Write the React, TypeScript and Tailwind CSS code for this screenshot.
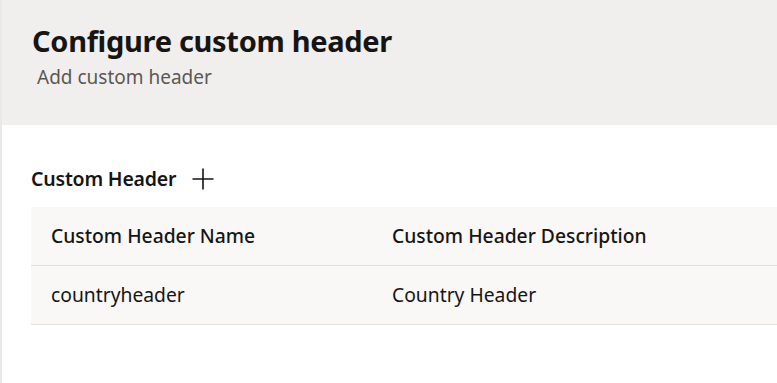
export default function App() {
  const font = { fontFamily: '"Noto Sans", "Open Sans", sans-serif' };
  return (
    <div className="w-[777px] h-[383px] bg-white border-l-2 border-[#ebe9e7] text-[#161513] overflow-hidden" style={font}>
      <div className="h-[125px] bg-[#f1efed] pl-[30px] pt-[21px]">
        <h1 className="text-[29px] font-bold leading-[40px] tracking-[-0.3px]">Configure custom header</h1>
        <p className="text-[19px] leading-[26px] text-[#5a5854] ml-[5px] mt-[3px]">Add custom header</p>
      </div>
      <div className="pl-[29px] pt-[40px]">
        <div className="flex items-center h-[28px]">
          <span className="text-[19.5px] font-semibold tracking-[-0.2px]">Custom Header</span>
          <svg className="ml-[16px]" width="22" height="22" viewBox="0 0 22 22">
            <path d="M11 0.5V21.5M0.5 11H21.5" stroke="#161513" strokeWidth="1.6" fill="none" />
          </svg>
        </div>
        <div className="mt-[14px] bg-[#f9f8f7]">
          <div className="flex h-[59px] items-center border-b border-[#e4e1dd] text-[19.3px] font-medium">
            <div className="w-[361px] pl-[20px]">Custom Header Name</div>
            <div className="flex-1">Custom Header Description</div>
          </div>
          <div className="flex h-[59px] items-center border-b border-[#e4e1dd] text-[19.3px]">
            <div className="w-[361px] pl-[20px]">countryheader</div>
            <div className="flex-1">Country Header</div>
          </div>
        </div>
      </div>
    </div>
  );
}
